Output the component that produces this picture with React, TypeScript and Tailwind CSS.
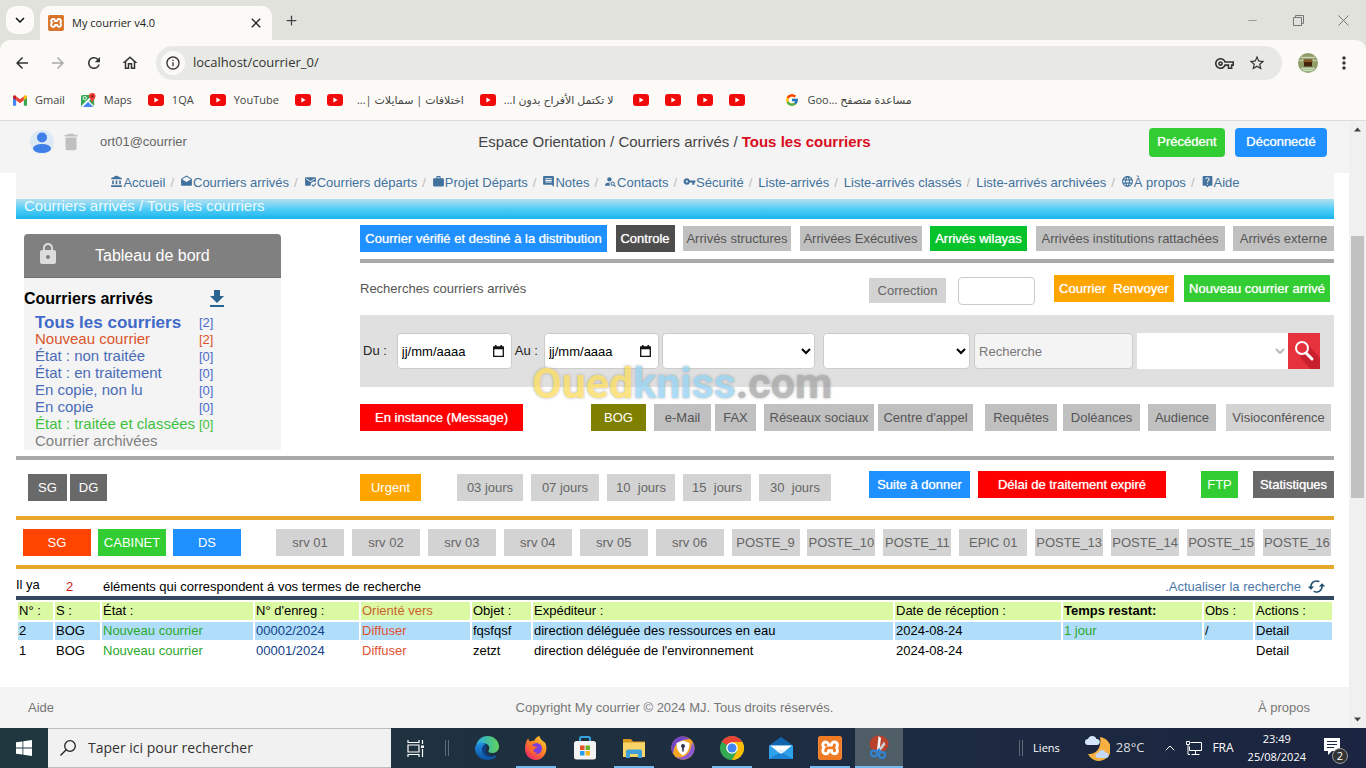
import React from 'react';
import {
  MdAccountBalance,
  MdArrowBack,
  MdArrowForward,
  MdCached,
  MdClose,
  MdComment,
  MdDelete,
  MdDrafts,
  MdDownload,
  MdInfoOutline,
  MdKeyboardArrowDown,
  MdLanguage,
  MdLiveHelp,
  MdLock,
  MdMarkEmailRead,
  MdMoreVert,
  MdOutlineHome,
  MdOutlineVpnKey,
  MdPersonSearch,
  MdRefresh,
  MdStarBorder,
  MdVpnKey,
  MdWork,
} from 'react-icons/md';
import { SiXampp } from 'react-icons/si';
import { FcGoogle } from 'react-icons/fc';
import { ChevronUp, Minus, Plus } from 'lucide-react';

const gray = 'bg-[#c0c0c0] text-[#555]';
const light = 'bg-[#d3d3d3] text-[#666]';
const glow = 'text-white [text-shadow:0_0_1px_rgba(255,255,255,0.8)]';

interface ChipProps {
  className: string;
  children: React.ReactNode;
}

const Chip: React.FC<ChipProps> = ({ className, children }) => (
  <button type="button" className={`h-[27px] shrink-0 whitespace-pre text-center cursor-pointer ${className}`}>
    {children}
  </button>
);

/* ---------- Browser chrome ---------- */

const YoutubeIcon = () => (
  <svg viewBox="0 0 16 12" className="w-4 h-3 shrink-0">
    <rect width="16" height="12" rx="3" fill="#f00a0a" />
    <path d="M6.4 3.6v4.8L10.6 6z" fill="#fff" />
  </svg>
);

const GmailIcon = () => (
  <svg viewBox="0 0 16 12" className="w-[14px] h-[11px] shrink-0">
    <path d="M0 1.5V11a1 1 0 0 0 1 1h2.6V4z" fill="#4285f4" />
    <path d="M16 1.5V11a1 1 0 0 1-1 1h-2.6V4z" fill="#34a853" />
    <path d="M3.6 1.2 8 4.6l4.4-3.4v4.6L8 9.2 3.6 5.8z" fill="#ea4335" />
    <path d="M0 2C0 .4 1.8-.5 3.1.5l.5.5v4.8L0 3.2z" fill="#c5221f" />
    <path d="M16 2c0-1.600-1.800-2.500-3.100-1.500l-.5.5v4.800L16 3.200z" fill="#fbbc04" />
  </svg>
);

const MapsIcon = () => (
  <svg viewBox="0 0 16 16" className="w-[15px] h-[15px] shrink-0">
    <rect x="0" y="2" width="14" height="13" rx="2" fill="#34a853" />
    <path d="M7 8.500 14 15H1z" fill="#4285f4" />
    <path d="m1 14.500 12-12" stroke="#fff" strokeWidth="2" />
    <path d="m7 8 7 7" stroke="#e8eaed" strokeWidth="1.500" />
    <circle cx="4" cy="5.500" r="1.800" fill="none" stroke="#fff" />
    <path d="M12 0a3.500 3.500 0 0 0-3.500 3.500C8.500 6 11 7 12 10.500 13 7 15.500 6 15.500 3.500A3.500 3.500 0 0 0 12 0z" fill="#ea4335" />
    <circle cx="12" cy="3.500" r="1.300" fill="#8c1a12" />
  </svg>
);

const BookmarkLink: React.FC<{ icon: React.ReactNode; label?: string; rtl?: boolean; className?: string }> = ({
  icon,
  label,
  rtl,
  className = '',
}) => (
  <a href="#" aria-label={label ?? 'YouTube'} className={`flex items-center gap-2 shrink-0 ${className}`}>
    {icon}
    {label && <span dir={rtl ? 'rtl' : 'ltr'}>{label}</span>}
  </a>
);

const BrowserChrome = () => (
  <header className="font-['Open_Sans','Noto_Sans','DejaVu_Sans',sans-serif] text-xs text-[#444] bg-[#e1e2dc]">
    <div className="h-10 flex items-end pl-1.5">
      <button aria-label="Rechercher dans les onglets" className="w-7 h-7 mb-1.5 rounded-[10px] bg-[#fbfaf6] flex items-center justify-center">
        <MdKeyboardArrowDown className="w-[18px] h-[18px] text-[#111]" />
      </button>
      <div className="ml-1.5 w-58 h-[34px] rounded-t-[10px] bg-[#fbfaf6] flex items-center px-2">
        <span className="w-4 h-4 bg-white rounded-sm">
          <SiXampp className="w-4 h-4 text-[#d9742b]" />
        </span>
        <span className="ml-2 text-[#222] text-[11px]">My courrier v4.0</span>
        <button aria-label="Fermer l'onglet" className="ml-auto">
          <MdClose className="w-4 h-4 text-[#222]" />
        </button>
      </div>
      <button aria-label="Nouvel onglet" className="self-center ml-3">
        <Plus className="w-[15px] h-[15px] text-[#444]" />
      </button>
      <div className="ml-auto self-center flex items-center gap-[34px] pr-[17px] text-[#888]">
        <button aria-label="Réduire"><Minus className="w-[13px] h-[13px]" strokeWidth={1.5} /></button>
        <button aria-label="Niveau inférieur">
          <svg viewBox="0 0 11 11" className="w-[11px] h-[11px]" fill="none" stroke="#777">
            <path d="M.5 2.500h8v8h-8zM2.500 2.500v-2h8v8h-2" />
          </svg>
        </button>
        <button aria-label="Fermer">
          <svg viewBox="0 0 11 11" className="w-[11px] h-[11px]" stroke="#777">
            <path d="m.5.5 10 10M10.500.5l-10 10" />
          </svg>
        </button>
      </div>
    </div>

    <div className="bg-[#fbfaf6] rounded-t-[10px] border-b border-[#ddd]">
      <div className="h-[46px] flex items-center pl-[13px] pr-3">
        <div className="flex items-center gap-[18px] text-[#333]">
          <button aria-label="Retour"><MdArrowBack className="w-[18px] h-[18px]" /></button>
          <button aria-label="Avancer"><MdArrowForward className="w-[18px] h-[18px] text-[#aaa]" /></button>
          <button aria-label="Actualiser"><MdRefresh className="w-[18px] h-[18px]" /></button>
          <button aria-label="Accueil"><MdOutlineHome className="w-[18px] h-[18px]" /></button>
        </div>
        <div className="ml-[17px] flex-1 h-[34px] rounded-full bg-[#e8e9e4] flex items-center pl-[5px] pr-4 text-[#333]">
          <span className="w-6 h-6 rounded-full bg-[#fbfaf6] flex items-center justify-center">
            <MdInfoOutline className="w-4 h-4" />
          </span>
          <input
            aria-label="Adresse"
            defaultValue="localhost/courrier_0/"
            className="ml-2 flex-1 text-[13px] outline-none bg-transparent"
          />
          <MdOutlineVpnKey className="w-[19px] h-[19px]" />
          <MdStarBorder className="w-[18px] h-[18px] ml-3.5" />
        </div>
        <svg viewBox="0 0 20 20" className="w-5 h-5 ml-4">
          <circle cx="10" cy="10" r="10" fill="#8f9b6a" />
          <path d="M3 4.500h14M1.500 7.500h17" stroke="#c9d3ae" strokeWidth="1.500" />
          <path d="M6 6.500h8v7H6z" fill="#43240f" />
          <path d="M5 8h10" stroke="#a8682b" strokeWidth="1.500" />
          <path d="M3 15.500h14M5 17.500h10" stroke="#c6e2bd" strokeWidth="1.500" />
        </svg>
        <button aria-label="Menu" className="ml-4"><MdMoreVert className="w-5 h-5 text-[#333]" /></button>
      </div>
      <nav className="h-[34px] pb-1.5 flex items-center pl-[13px] text-[11px]">
        <BookmarkLink icon={<GmailIcon />} label="Gmail" />
        <BookmarkLink icon={<MapsIcon />} label="Maps" className="ml-4" />
        <BookmarkLink icon={<YoutubeIcon />} label="1QA" className="ml-4" />
        <BookmarkLink icon={<YoutubeIcon />} label="YouTube" className="ml-4" />
        <BookmarkLink icon={<YoutubeIcon />} className="ml-4" />
        <BookmarkLink icon={<YoutubeIcon />} className="ml-4" />
        <a href="#" dir="rtl" className="ml-3.5 shrink-0">اختلافات | سمايلات |...</a>
        <BookmarkLink icon={<YoutubeIcon />} label="لا تكتمل الأفراح بدون ا..." rtl className="ml-4" />
        <BookmarkLink icon={<YoutubeIcon />} className="ml-5" />
        <BookmarkLink icon={<YoutubeIcon />} className="ml-4" />
        <BookmarkLink icon={<YoutubeIcon />} className="ml-4" />
        <BookmarkLink icon={<YoutubeIcon />} className="ml-4" />
        <BookmarkLink icon={<FcGoogle className="w-[14px] h-[14px]" />} label="مساعدة متصفح ...Goo" rtl className="ml-10" />
      </nav>
    </div>
  </header>
);

/* ---------- Page header ---------- */

const navItems = [
  { label: 'Accueil', Icon: MdAccountBalance },
  { label: 'Courriers arrivés', Icon: MdDrafts },
  { label: 'Courriers départs', Icon: MdMarkEmailRead },
  { label: 'Projet Départs', Icon: MdWork },
  { label: 'Notes', Icon: MdComment },
  { label: 'Contacts', Icon: MdPersonSearch },
  { label: 'Sécurité', Icon: MdVpnKey },
  { label: 'Liste-arrivés' },
  { label: 'Liste-arrivés classés' },
  { label: 'Liste-arrivés archivées' },
  { label: 'À propos', Icon: MdLanguage },
  { label: 'Aide', Icon: MdLiveHelp },
];

const PageHeader = () => (
  <>
    <div className="h-[52px] bg-[#f4f4f4] grid grid-cols-[1fr_auto_1fr] items-center px-[22px] pb-2.5">
      <div className="flex items-center pl-2 text-[#666]">
        <svg viewBox="0 0 24 24" className="w-6 h-6">
          <circle cx="12" cy="12" r="12" fill="#dce9f5" />
          <circle cx="12" cy="7.500" r="5" fill="#3f7fe8" />
          <ellipse cx="12" cy="18.500" rx="9" ry="4.500" fill="#3f7fe8" />
        </svg>
        <MdDelete className="ml-1.5 w-[22px] h-[22px] text-[#c0c0c0]" />
        <span className="ml-[18px]">ort01@courrier</span>
      </div>
      <h1 className="text-[15px] text-[#444]">
        Espace Orientation / Courriers arrivés / <b className="text-[#d90d1c]">Tous les courriers</b>
      </h1>
      <div className="flex justify-end gap-2.5">
        <button className={`w-[76px] h-[29px] rounded bg-[#32cd32] ${glow}`}>Précédent</button>
        <button className={`w-[92px] h-[29px] rounded bg-[#1e90ff] ${glow}`}>Déconnecté</button>
      </div>
    </div>
    <nav className="ml-4 mr-[15px] h-[26px] bg-[#f4f4f4] flex items-center justify-center pb-1.5 text-[#41719c]">
      {navItems.map(({ label, Icon }, i) => (
        <React.Fragment key={label}>
          {i > 0 && <span className="ml-[5px] mr-1.5 text-[#bbb]">/</span>}
          <a href="#" className="flex items-center whitespace-nowrap">
            {Icon && <Icon className="w-[13px] h-[13px] mb-1" />}
            {label}
          </a>
        </React.Fragment>
      ))}
    </nav>
    <div className="ml-4 mr-[15px] h-5 pl-2 leading-[14px] text-[15px] text-[#eefaff] bg-linear-to-b from-[#b0dfee] via-[#4fcdf8] to-[#10b4ea]">
      Courriers arrivés / Tous les courriers
    </div>
  </>
);

/* ---------- Dashboard ---------- */

const folders = [
  { label: 'Tous les courriers', count: '[2]', style: 'text-[#4169c8] text-[17px] font-bold' },
  { label: 'Nouveau courrier', count: '[2]', style: 'text-[#d9542b]', countStyle: 'text-[#d9542b]' },
  { label: 'État : non traitée', count: '[0]', style: 'text-[#4a6cb8]' },
  { label: 'État : en traitement', count: '[0]', style: 'text-[#4a6cb8]' },
  { label: 'En copie, non lu', count: '[0]', style: 'text-[#4a6cb8]' },
  { label: 'En copie', count: '[0]', style: 'text-[#4a6cb8]' },
  { label: 'État : traitée et classées', count: '[0]', style: 'text-[#3fc13f]', countStyle: 'text-[#3fc13f]' },
  { label: 'Courrier archivées', count: '', style: 'text-[#808080]' },
];

const Dashboard = () => (
  <aside className="w-[257px] ml-2 mr-[79px] mt-[15px] shrink-0 self-start bg-[#f4f4f4]">
    <div className="h-11 rounded-t bg-[#808080] border-b border-[#6d6d6d] flex items-center pl-3 text-base text-white">
      <MdLock className="w-6 h-6 mb-1 text-[#dcdcdc]" />
      <span className="ml-[35px]">Tableau de bord</span>
    </div>
    <div className="h-9 flex items-center pt-1.5 text-base font-bold text-black">
      Courriers arrivés
      <MdDownload className="ml-13 w-6 h-6 text-[#2a6592]" />
    </div>
    <ul className="pl-[11px] text-[15px]">
      {folders.map((f) => (
        <li key={f.label} className="h-[17px] flex items-center">
          <a href="#" className={`w-[164px] whitespace-nowrap ${f.style}`}>{f.label}</a>
          <span className={`text-[13px] ${f.countStyle ?? 'text-[#4a6cc8]'}`}>{f.count}</span>
        </li>
      ))}
    </ul>
  </aside>
);

/* ---------- Filters ---------- */

const DateField: React.FC<{ id: string; label: string }> = ({ id, label }) => (
  <>
    <label htmlFor={id} className="shrink-0 text-[#222]">{label}</label>
    <div className="relative w-[115px] shrink-0">
      <input
        id={id}
        type="text"
        placeholder="jj/mm/aaaa"
        className="w-full h-9 pl-1 rounded border border-[#ccc] bg-white placeholder:text-black"
      />
      <svg viewBox="0 0 11 12" className="absolute right-2 top-3 w-[11px] h-3">
        <path d="M.7 2.200h9.600v9.100H.7z" fill="none" stroke="#111" strokeWidth="1.300" />
        <path d="M.5 1.500h10v2.700H.5zM2 0h1.500v2H2zM7.500 0H9v2H7.500z" fill="#111" />
      </svg>
    </div>
  </>
);

const SearchForm = () => (
  <form className="mt-2.5 h-[72px] bg-[#e0e0e0] flex items-center pl-[3px] pr-3.5" onSubmit={(e) => e.preventDefault()}>
    <div className="flex items-center gap-2.5 shrink-0">
      <DateField id="du" label="Du :" />
    </div>
    <div className="flex items-center gap-1.5 shrink-0 ml-[3px]">
      <DateField id="au" label="Au :" />
    </div>
    <select aria-label="Structure" className="ml-[3px] flex-[153] h-9 rounded border border-[#ccc] bg-white text-black" />
    <select aria-label="État" className="ml-2 flex-[146] h-9 rounded border border-[#ccc] bg-white text-black" />
    <input
      aria-label="Recherche"
      placeholder="Recherche"
      className="ml-1 flex-[154] min-w-0 h-9 pl-1 rounded border border-[#ccc] bg-[#f4f4f4] placeholder:text-[#777]"
    />
    <select aria-label="Type" className="ml-1 flex-[153] h-9 bg-white text-[#bbb]" />
    <button aria-label="Rechercher" className="w-8 h-9 shrink-0 bg-[#e5323c]">
      <svg viewBox="0 0 32 36" className="w-8 h-9">
        <path d="m21 13 11 12v11H22L12 24z" fill="#c9202f" />
        <circle cx="14" cy="15" r="6" fill="none" stroke="#fff" strokeWidth="2" />
        <path d="m18 20 6 6" stroke="#fff" strokeWidth="3" strokeLinecap="round" />
      </svg>
    </button>
  </form>
);

const FilterPanel = () => (
  <section className="flex-1 min-w-0">
    <div className="mt-1.5 flex items-center justify-between">
      <Chip className={`w-[247px] bg-[#1e90ff] ${glow}`}>Courrier vérifié et destiné à la distribution</Chip>
      <Chip className={`w-[59px] bg-[#4d4d4d] ${glow}`}>Controle</Chip>
      <Chip className={`w-27 h-[25px]! ${gray}`}>Arrivés structures</Chip>
      <Chip className={`w-[122px] h-[25px]! ${gray}`}>Arrivées Exécutives</Chip>
      <Chip className={`w-[97px] h-[25px]! bg-[#06c22b] ${glow}`}>Arrivés wilayas</Chip>
      <Chip className={`w-[189px] h-[25px]! ${gray}`}>Arrivées institutions rattachées</Chip>
      <Chip className={`w-[101px] h-[25px]! ${gray}`}>Arrivés externe</Chip>
    </div>
    <hr className="mt-[7px] border-0 h-1 bg-[#a9a9a9]" />
    <div className="mt-3 h-[30px] flex items-start pr-1">
      <p className="pt-1 text-[#555]">Recherches courriers arrivés</p>
      <Chip className={`ml-auto w-[77px] mt-[3px] h-[25px]! ${light}`}>Correction</Chip>
      <input aria-label="Correction" className="ml-3 mt-0.5 w-[77px] h-7 rounded border border-[#ccc] bg-white" />
      <Chip className={`ml-[19px] w-30 bg-[#ffa500] ${glow}`}>{'Courrier  Renvoyer'}</Chip>
      <Chip className={`ml-2.5 w-[146px] bg-[#32cd32] ${glow}`}>Nouveau courrier arrivé</Chip>
    </div>
    <SearchForm />
    <div className="mt-[17px] flex pr-[3px]">
      <Chip className={`w-[163px] bg-[#ff0000] ${glow}`}>En instance (Message)</Chip>
      <Chip className="ml-auto w-[55px] bg-[#808000] text-white">BOG</Chip>
      <Chip className={`ml-2 w-[57px] ${gray}`}>e-Mail</Chip>
      <Chip className={`ml-1 w-[41px] ${gray}`}>FAX</Chip>
      <Chip className={`ml-2 w-[110px] ${gray}`}>Réseaux sociaux</Chip>
      <Chip className={`ml-1 w-[95px] ${gray}`}>Centre d'appel</Chip>
      <Chip className={`ml-3 w-[72px] ${gray}`}>Requêtes</Chip>
      <Chip className={`ml-1.5 w-[77px] ${gray}`}>Doléances</Chip>
      <Chip className={`ml-2 w-[68px] ${gray}`}>Audience</Chip>
      <Chip className="ml-2.5 w-[105px] bg-[#d3d3d3] text-[#555]">Visioconférence</Chip>
    </div>
  </section>
);

const services = [
  'srv 01', 'srv 02', 'srv 03', 'srv 04', 'srv 05', 'srv 06', 'POSTE_9',
  'POSTE_10', 'POSTE_11', 'EPIC 01', 'POSTE_13', 'POSTE_14', 'POSTE_15', 'POSTE_16',
];

const ServiceRows = () => (
  <>
    <div className="h-14 pt-[11px] flex items-start">
      <div className="w-[344px] pl-3 pt-[3px] flex gap-[3px] shrink-0">
        <Chip className="w-[39px] bg-[#696969] text-white">SG</Chip>
        <Chip className="w-[37px] bg-[#696969] text-white">DG</Chip>
      </div>
      <div className="flex pt-[3px] gap-2">
        <Chip className="w-[61px] mr-7 bg-[#ffa500] text-white">Urgent</Chip>
        <Chip className={`w-[66px] ${light}`}>03 jours</Chip>
        <Chip className={`w-17 ${light}`}>07 jours</Chip>
        <Chip className={`w-17 ${light}`}>{'10  jours'}</Chip>
        <Chip className={`w-17 ${light}`}>{'15  jours'}</Chip>
        <Chip className={`w-[72px] ${light}`}>{'30  jours'}</Chip>
      </div>
      <Chip className={`ml-auto w-[101px] bg-[#1e90ff] ${glow}`}>Suite à donner</Chip>
      <Chip className={`ml-2 w-[188px] bg-[#ff0000] ${glow}`}>Délai de traitement expiré</Chip>
      <Chip className="ml-[35px] w-[37px] bg-[#32cd32] text-white">FTP</Chip>
      <Chip className={`ml-[15px] w-[81px] bg-[#696969] ${glow}`}>Statistiques</Chip>
    </div>
    <hr className="border-0 h-1 bg-[#e8a82d]" />
    <div className="py-[9px] pl-[7px] pr-[3px] flex">
      <div className="flex gap-[7px] shrink-0">
        <Chip className="w-17 bg-[#ff4500] text-white">SG</Chip>
        <Chip className="w-17 bg-[#32cd32] text-white">CABINET</Chip>
        <Chip className="w-17 bg-[#1e90ff] text-white">DS</Chip>
      </div>
      <div className="ml-[35px] flex-1 flex justify-between">
        {services.map((s) => (
          <Chip key={s} className={`w-17 ${light}`}>{s}</Chip>
        ))}
      </div>
    </div>
    <hr className="border-0 h-1 bg-[#e8a82d]" />
  </>
);

/* ---------- Results ---------- */

const columns = [
  { label: 'N° :', width: 'w-[35px]' },
  { label: 'S :', width: 'w-[45px]' },
  { label: 'État :', width: 'w-[151px]' },
  { label: "N° d'enreg :", width: 'w-[104px]' },
  { label: 'Orienté vers', width: 'w-[109px]', style: 'text-[#c9652b]' },
  { label: 'Objet :', width: 'w-[59px]' },
  { label: 'Expéditeur :', width: '' },
  { label: 'Date de réception :', width: 'w-[166px]' },
  { label: 'Temps restant:', width: 'w-[139px]', style: 'font-bold' },
  { label: 'Obs :', width: 'w-[49px]' },
  { label: 'Actions :', width: 'w-[77px]' },
];

const mails = [
  { n: 2, enreg: '00002/2024', objet: 'fqsfqsf', from: 'direction déléguée des ressources en eau', left: '1 jour', obs: '/' },
  { n: 1, enreg: '00001/2024', objet: 'zetzt', from: "direction déléguée de l'environnement", left: '', obs: '' },
];

const Results = () => (
  <section className="text-black">
    <div className="h-[27px] flex items-center pt-2">
      <span className="w-[50px] mb-1">Il ya</span>
      <span className="w-[37px] text-[#d01818]">2</span>
      <span>éléments qui correspondent á vos termes de recherche</span>
      <a href="#" className="ml-auto mr-2 flex items-center gap-1.5 text-[#4a77a8]">
        .Actualiser la recherche
        <MdCached className="w-[19px] h-[19px] text-[#1d4e6b]" />
      </a>
    </div>
    <table className="w-full table-fixed border-separate border-spacing-[2px] border-t-4 border-[#34495e] text-left leading-4">
      <thead>
        <tr className="bg-[#dbf8a3]">
          {columns.map((c) => (
            <th key={c.label} className={`p-px whitespace-nowrap ${c.style === 'font-bold' ? 'font-bold' : 'font-normal'} ${c.width} ${c.style ?? ''}`}>
              {c.label}
            </th>
          ))}
        </tr>
      </thead>
      <tbody>
        {mails.map((m, i) => (
          <tr key={m.n} className={i === 0 ? 'bg-[#b0defa]' : ''}>
            <td className="p-px">{m.n}</td>
            <td className="p-px">BOG</td>
            <td className="p-px text-[#2ca82c]">Nouveau courrier</td>
            <td className="p-px text-[#123f8c]"><a href="#">{m.enreg}</a></td>
            <td className="p-px text-[#e0522f]"><a href="#">Diffuser</a></td>
            <td className="p-px">{m.objet}</td>
            <td className="p-px">{m.from}</td>
            <td className="p-px">2024-08-24</td>
            <td className="p-px text-[#2ca82c]">{m.left}</td>
            <td className="p-px">{m.obs}</td>
            <td className="p-px"><a href="#">Detail</a></td>
          </tr>
        ))}
      </tbody>
    </table>
  </section>
);

const Scrollbar = () => (
  <div className="w-[17px] shrink-0 flex flex-col items-center bg-[#f0f0f0]">
    <svg viewBox="0 0 17 17" className="w-[17px] h-[17px]"><path d="m5 10.500 3.500-4 3.500 4z" fill="#444" /></svg>
    <div className="flex-[98]" />
    <div className="flex-[261] w-[13px] bg-[#c1c1c1]" />
    <div className="flex-[213]" />
    <svg viewBox="0 0 17 17" className="w-[17px] h-[17px]"><path d="m5 6.500 3.500 4 3.500-4z" fill="#444" /></svg>
  </div>
);

/* ---------- Taskbar ---------- */

const EdgeIcon = () => (
  <svg viewBox="0 0 24 24" className="w-6 h-6">
    <defs>
      <linearGradient id="edgeTop" x1="0" x2="1"><stop stopColor="#2aa9e6" /><stop offset="1" stopColor="#5fd35a" /></linearGradient>
      <linearGradient id="edgeLow" x1="0" y1="0" x2="0" y2="1"><stop stopColor="#1f8fe0" /><stop offset="1" stopColor="#0c4fa0" /></linearGradient>
    </defs>
    <path d="M1 11C1.500 4.500 6.500 0 12.500 0 19 0 24 5 24 10.500c0 4-3 6.500-6.500 6.500-2.800 0-4.500-1-4-2.300 1.500-1.700 1.200-5.700-2.500-7C7 6.500 3 8 1 11z" fill="url(#edgeTop)" />
    <path d="M0 12c1-5 7-6.500 10.500-4-3 1.500-4 4.500-3 7.500 1.300 4.500 7 6.500 12 4.500 1.500-.7 2.200-.2 1.500.8C18.500 23.500 15 24 12 24 5 24 0 18.500 0 12z" fill="url(#edgeLow)" />
    <path d="M10.500 8C7.500 9.500 6.500 12.500 7.500 15.500c1.300 4.500 7 6.500 12 4.500-6 .5-9.500-3-8.500-7 .5-2 1.500-4-.5-5z" fill="#0b3f86" />
  </svg>
);

const FirefoxIcon = () => (
  <svg viewBox="0 0 24 24" className="w-6 h-6">
    <defs>
      <linearGradient id="fox" x1="1" y1="0" x2="0.200" y2="1"><stop stopColor="#ffe03a" /><stop offset="0.450" stopColor="#ff8a1e" /><stop offset="1" stopColor="#f0246a" /></linearGradient>
    </defs>
    <path d="M2 6.500C2.500 4.500 3.500 3 4.500 2.500 4.500 4 5 5 6 5.500c1-.7 2.500-1 4-.7C11.500 2 13.500.5 15.500 0c.2 2.500 2 3.500 3.800 5.500 1 .2 1.700 1 2.200 2C24.500 15 20 24 12 24 5 24 1 18.500 1 13c0-2.500.3-4.500 1-6.500z" fill="url(#fox)" />
    <circle cx="12.500" cy="12.500" r="5.500" fill="#7b3fe0" />
    <path d="M5 10c3-1.500 6 .5 8.500 1-1.500 2-4 1.500-4 3.500 0 1.500 2 2.500 4 2-3 3-9 1-8.500-6.500z" fill="#ff6a2a" />
  </svg>
);

const StoreIcon = () => (
  <svg viewBox="0 0 24 24" className="w-6 h-6">
    <path d="M7 6V2.500A1.500 1.500 0 0 1 8.500 1h7A1.500 1.500 0 0 1 17 2.500V6" fill="none" stroke="#35a3e0" strokeWidth="2" />
    <rect x="1" y="5" width="22" height="18.500" rx="2.500" fill="#f3f3f3" />
    <path d="M7 9.500h4.500V14H7z" fill="#e8512b" /><path d="M12.500 9.500H17V14h-4.500z" fill="#6ab52c" />
    <path d="M7 15h4.500v4.500H7z" fill="#2a9ee8" /><path d="M12.500 15H17v4.500h-4.500z" fill="#f7b619" />
  </svg>
);

const ExplorerIcon = () => (
  <svg viewBox="0 0 24 24" className="w-6 h-6">
    <path d="M1 3h8l2 2.500h12V8H1z" fill="#d9971e" />
    <path d="M1 6.500h22V21H1z" fill="#f8d568" />
    <path d="M4 22v-6.500A2 2 0 0 1 6 13.500h12a2 2 0 0 1 2 2V22h-4v-4H8v4z" fill="#3f9fd8" />
  </svg>
);

const VaultIcon = () => (
  <svg viewBox="0 0 24 24" className="w-6 h-6">
    <circle cx="12" cy="12" r="11.500" fill="#f5a623" />
    <path d="M12 .5A11.500 11.500 0 0 0 2 18C3 9 6 4 19 3A11 11 0 0 0 12 .5z" fill="#7345c9" />
    <path d="M23.500 12A11.500 11.500 0 0 1 5 21c8 2 15-3 16-15a11 11 0 0 1 2.500 6z" fill="#8d59d6" />
    <path d="M12 4.500 18.500 7c0 6-2 10-6.500 12.500C7.500 17 5.500 13 5.500 7z" fill="#fff" />
    <circle cx="12" cy="10" r="2" fill="#35304d" /><path d="M11.200 11h1.600v4.500h-1.600z" fill="#35304d" />
  </svg>
);

const ChromeIcon = () => (
  <svg viewBox="0 0 24 24" className="w-6 h-6">
    <circle cx="12" cy="12" r="12" fill="#34a853" />
    <path d="M12 12 1.600 6A12 12 0 0 1 22.400 6H12z" fill="#ea4335" />
    <path d="M12 6h10.400A12 12 0 0 1 12 24l5.200-9z" fill="#fbbc04" />
    <path d="M1.600 6 6.800 15 12 12z" fill="#34a853" />
    <circle cx="12" cy="12" r="5.800" fill="#fff" /><circle cx="12" cy="12" r="4.500" fill="#4285f4" />
  </svg>
);

const MailIcon = () => (
  <svg viewBox="0 0 24 24" className="w-6 h-6">
    <path d="M0 9.500 12 1l12 8.500V12H0z" fill="#1166b0" />
    <path d="M0 9.500h24V23H0z" fill="#2fa0ea" />
    <path d="M1 9.500h22L12 18z" fill="#fff" />
    <path d="m0 23 12-7 12 7z" fill="#1c83d4" />
    <path d="M7 14.500 12 18l5-3.500-5-1z" fill="#dbeefb" />
  </svg>
);

const XamppTile = () => (
  <span className="w-6 h-6 rounded bg-white"><SiXampp className="w-6 h-6 text-[#ee7b23]" /></span>
);

const SnipIcon = () => (
  <svg viewBox="0 0 22 24" className="w-[22px] h-6">
    <ellipse cx="11" cy="9" rx="9.500" ry="8.500" fill="#b9402b" />
    <path d="M10.500 1 9 15h2.500L13 3z" fill="#f4f4f4" />
    <path d="M16 6.500 10 15l2 1.500 5.500-7z" fill="#c9ced3" />
    <circle cx="6" cy="18.500" r="3" fill="none" stroke="#2f86d6" strokeWidth="2" />
    <circle cx="14" cy="20" r="3" fill="none" stroke="#2f86d6" strokeWidth="2" />
    <path d="m8.500 17 2.500-2.500 2 3" fill="none" stroke="#2f86d6" strokeWidth="2" />
  </svg>
);

const apps = [
  { name: 'Edge', Icon: EdgeIcon, running: false },
  { name: 'Firefox', Icon: FirefoxIcon, running: true },
  { name: 'Store', Icon: StoreIcon, running: false },
  { name: 'Explorateur', Icon: ExplorerIcon, running: true },
  { name: 'Vault', Icon: VaultIcon, running: false },
  { name: 'Chrome', Icon: ChromeIcon, running: true },
  { name: 'Courrier', Icon: MailIcon, running: false },
  { name: 'XAMPP', Icon: XamppTile, running: true },
];

const Grip = () => <span className="w-1 h-4 border-x border-[#5d6b75]" />;

const Taskbar = () => (
  <footer className="h-10 flex items-center bg-linear-to-r from-[#20373f] to-[#1b2440] text-white text-xs font-['Open_Sans','Noto_Sans',sans-serif]">
    <button aria-label="Démarrer" className="w-12 h-10 flex items-center justify-center">
      <svg viewBox="0 0 16 16" className="w-4 h-4" fill="#fff">
        <path d="M0 2.300 6.500 1.400v6.200H0zM7.300 1.300 16 0v7.600H7.300zM0 8.400h6.500v6.200L0 13.700zM7.300 8.400H16V16l-8.700-1.300z" />
      </svg>
    </button>
    <label className="w-[343px] h-10 flex items-center gap-3 px-3 bg-[#f1f1f1] border-y border-[#bbb] text-[#333]">
      <svg viewBox="0 0 16 16" className="w-4 h-4" fill="none" stroke="#222" strokeWidth="1.300">
        <circle cx="10" cy="6" r="5.300" />
        <path d="M6.200 9.800.500 15.500" />
      </svg>
      <input aria-label="Rechercher" placeholder="Taper ici pour rechercher" className="flex-1 text-sm outline-none placeholder:text-[#333]" />
    </label>
    <button aria-label="Affichage des tâches" className="w-12 h-10 flex items-center justify-center">
      <svg viewBox="0 0 17 17" className="w-[17px] h-[17px]" fill="none" stroke="#fff" strokeWidth="1.200">
        <path d="M1 0v2.500h11V0M1 5h11v7H1zM1 17v-2.500h11V17M15.500 0v4M15.500 9v8" />
        <path d="M14 5.500h3v2.500h-3z" fill="#fff" stroke="none" />
      </svg>
    </button>
    <span className="ml-1.5 mr-3.5 flex"><Grip /></span>
    <div className="flex gap-px">
      {apps.map(({ name, Icon, running }) => (
        <button key={name} aria-label={name} className="relative w-12 h-10 flex items-center justify-center">
          <Icon />
          {running && <span className="absolute bottom-0 left-1 right-1 h-0.5 bg-[#76b9ed]" />}
        </button>
      ))}
      <button aria-label="Outil Capture" className="w-12 h-10 flex items-center justify-center bg-[#4f5d67] border-b-2 border-[#76b9ed]">
        <SnipIcon />
      </button>
    </div>
    <div className="ml-auto flex items-center pr-[18px]">
      <Grip />
      <span className="ml-2.5 text-[11px]">Liens</span>
      <svg viewBox="0 0 26 26" className="ml-6 w-[26px] h-[26px]">
        <path d="M16 2a12 12 0 1 1-12 17c8 1 14-6 12-17z" fill="#f6b042" />
        <path d="M4 10a3 3 0 0 1 0-6 4.500 4.500 0 0 1 8.500 0 3 3 0 0 1 .5 6z" fill="#d5e6fa" />
        <path d="M14 23a2.500 2.500 0 0 1 0-5 4 4 0 0 1 7.500-.5 2.800 2.800 0 0 1 1 5.500z" fill="#c2d8f5" />
      </svg>
      <span className="ml-1.5 text-[13px] text-[#ddd]">28°C</span>
      <ChevronUp className="ml-[18px] w-4 h-4" strokeWidth={1.5} />
      <svg viewBox="0 0 16 16" className="ml-2 w-4 h-4" fill="none" stroke="#fff">
        <path d="M4.500 2.500h11v8H3.500v-4M9.500 10.500v4M5.500 14.500h8M.5 1.500h3v3h-3zM2 4.500v10h2" />
      </svg>
      <span className="ml-2.5 text-xs">FRA</span>
      <div className="ml-3.5 text-center text-[11px] leading-[18px]">
        <div>23:49</div>
        <div>25/08/2024</div>
      </div>
      <button aria-label="Notifications" className="relative ml-[18px] w-6 h-6">
        <svg viewBox="0 0 24 24" className="w-6 h-6">
          <path d="M0 2h16v13H8l-4 4v-4H0z" fill="#fff" />
          <path d="M3 5.500h10M3 8.500h10M3 11.500h7" stroke="#1b2440" />
        </svg>
        <span className="absolute -bottom-1 right-0 w-4 h-4 rounded-full bg-[#333] border border-[#999] text-[11px] leading-[14px]">2</span>
      </button>
    </div>
  </footer>
);

export default function App() {
  return (
    <div className="min-h-screen flex flex-col bg-white font-['Liberation_Sans',Arial,sans-serif] text-[13px]">
      <BrowserChrome />
      <div className="flex-1 flex">
        <div className="flex-1 min-w-0 flex flex-col">
          <PageHeader />
          <main className="flex-1 pl-4 pr-[15px]">
            <div className="relative flex">
              <Dashboard />
              <FilterPanel />
              <div
                aria-hidden="true"
                className="pointer-events-none absolute left-[516px] top-[139px] font-['Roboto',sans-serif] font-bold text-[43px] leading-[50px] opacity-75 [text-shadow:0_0_3px_#999]"
              >
                <span className="text-[#fbdc5c]">Oued</span>
                <span className="text-[#92d0f2]">kniss</span>
                <span className="text-[#a3a3a3]">.com</span>
              </div>
            </div>
            <hr className="mt-1.5 border-0 h-1 bg-[#a9a9a9]" />
            <ServiceRows />
            <Results />
          </main>
          <div className="h-[41px] grid grid-cols-3 items-center px-7 bg-[#f4f4f4] text-[#777]">
            <a href="#">Aide</a>
            <p className="text-center whitespace-nowrap">Copyright My courrier © 2024 MJ. Tous droits réservés.</p>
            <a href="#" className="text-right pr-[11px]">À propos</a>
          </div>
        </div>
        <Scrollbar />
      </div>
      <Taskbar />
    </div>
  );
}
